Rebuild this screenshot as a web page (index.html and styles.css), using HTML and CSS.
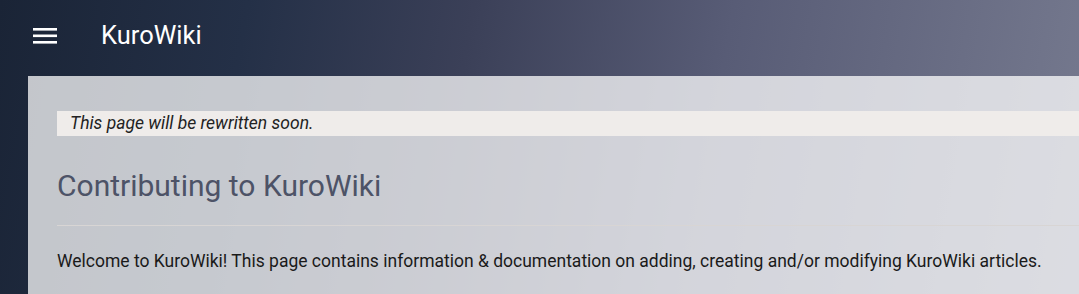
FILE: index.html
```html
<!DOCTYPE html>
<html>
<head>
    <meta charset="UTF-8">
    <title>KuroWiki - Contributing</title>
    <link rel="stylesheet" href="styles.css">
</head>
<body>
    <header class="topbar">
        <button class="menu-btn" aria-label="Menu">
            <svg width="24" height="16" viewBox="0 0 24 16">
                <rect x="0" y="0" width="24" height="2.6" fill="#fff"/>
                <rect x="0" y="6.5" width="24" height="2.6" fill="#fff"/>
                <rect x="0" y="13" width="24" height="2.6" fill="#fff"/>
            </svg>
        </button>
        <span class="brand">KuroWiki</span>
    </header>

    <main class="page">
        <div class="notice">This page will be rewritten soon.</div>
        <h1>Contributing to KuroWiki</h1>
        <hr>
        <p>Welcome to KuroWiki! This page contains information &amp; documentation on adding, creating and/or modifying KuroWiki articles.</p>
    </main>
</body>
</html>
```

FILE: styles.css
```css
html, body { margin: 0; height: 100%; overflow: hidden; }
body {
    font-family: Roboto, "Liberation Sans", sans-serif;
    background: linear-gradient(100deg, #1a2436 0%, #243047 22%, #3b4058 42%, #585c76 65%, #767a8f 100%);
    background-color: #142236;
}
.topbar { display: flex; align-items: center; height: 76px; padding-left: 33px; box-sizing: border-box; }
.menu-btn { background: none; border: none; padding: 0; margin: -5px 44px 0 0; display: flex; cursor: pointer; }
.brand { color: #fff; font-size: 25.5px; line-height: 1; margin-top: -5px; }
.page {
    margin-left: 28px;
    padding: 35px 0 0 29px;
    height: calc(100% - 76px);
    box-sizing: border-box;
    background: rgba(255, 255, 255, 0.74);
}
.notice {
    background: #efecea;
    color: #222;
    font-style: italic;
    font-size: 17.5px;
    line-height: 25px;
    padding-left: 13px;
}
h1 { margin: 34px 0 0; font-size: 30px; font-weight: 400; color: #4d5367; line-height: 32px; }
hr { margin: 23px 0 0; border: none; border-top: 1px solid #d8d5d4; }
p { margin: 23px 0 0; font-size: 17.5px; color: #1a1a1a; line-height: 24px; }
```
